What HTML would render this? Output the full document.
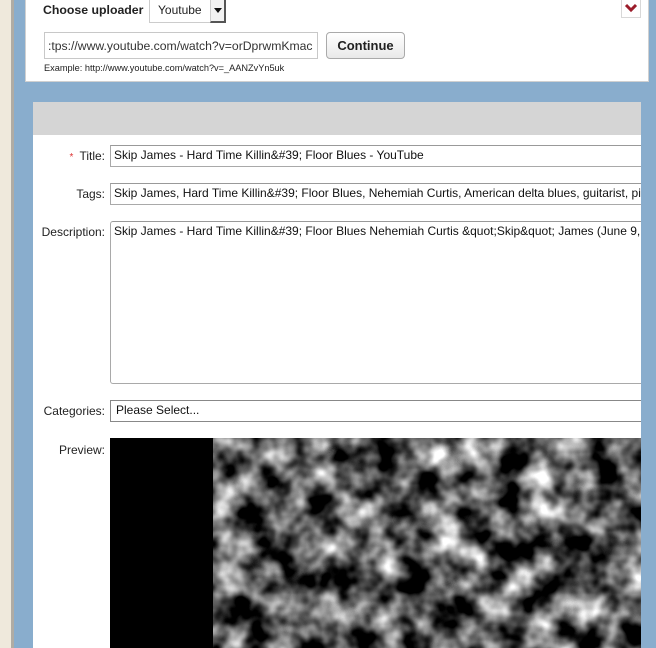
<!DOCTYPE html>
<html><head><style>
*{margin:0;padding:0;box-sizing:border-box}
body{width:656px;height:648px;overflow:hidden;background:#89adcd;font-family:"Liberation Sans",Arial,sans-serif;position:relative;font-size:12px;color:#222}
.abs{position:absolute}
.inp{position:absolute;background:#fff;border:1px solid #a9a9a9;border-top-color:#999;white-space:nowrap;overflow:hidden;font-size:12px;color:#111;padding:2px 3px}
.lbl{position:absolute;font-size:12px;color:#222;text-align:right;width:105px;left:0}
</style></head><body>
<div class="abs" style="left:0;top:0;width:11px;height:648px;background:#efe9dc"></div>
<div class="abs" style="left:11px;top:0;width:3px;height:648px;background:#b0aca4"></div>
<div class="abs" style="left:25px;top:0;width:624px;height:82px;background:#fff;border:1px solid #d0d0d0;border-top:none"></div>
<div class="abs" style="left:43px;top:3px;font-weight:bold;font-size:12.3px;color:#222">Choose uploader</div>
<div class="abs" style="left:149px;top:0;width:77px;height:23px;background:#fff;border:1px solid #ccc;border-top:none;font-size:12px;padding:3px 0 0 8px">Youtube</div>
<div class="abs" style="left:210px;top:0;width:16px;height:23px;background:#f2f2f2;border-left:1px solid #ccc;border-right:2px solid #555;border-bottom:2px solid #555"></div>
<div class="abs" style="left:214px;top:8px;width:0;height:0;border-left:4px solid transparent;border-right:4px solid transparent;border-top:5px solid #111"></div>
<div class="abs" style="left:621px;top:0;width:20px;height:18px;border:1px solid #d8d8d8;border-top:none"></div>
<svg class="abs" style="left:624px;top:3px" width="14" height="10"><path d="M2 2 L7 7 L12 2" stroke="#9b1c2a" stroke-width="3" fill="none"/></svg>
<div class="inp" style="left:44px;top:32px;width:274px;height:27px;font-size:12.2px;padding:6px 3px;color:#333;border-color:#c8c8c8">:tps://www.youtube.com/watch?v=orDprwmKmac</div>
<div class="abs" style="left:326px;top:32px;width:79px;height:27px;border:1px solid #aaa;border-radius:4px;background:linear-gradient(#fff,#e9e9e9);font-weight:bold;font-size:13px;text-align:center;line-height:25px">Continue</div>
<div class="abs" style="left:44px;top:63px;font-size:9.2px;color:#222">Example: http://www.youtube.com/watch?v=_AANZvYn5uk</div>
<div class="abs" style="left:33px;top:102px;width:608px;height:33px;background:#d5d5d5"></div>
<div class="abs" style="left:33px;top:135px;width:608px;height:513px;background:#fff"></div>
<div class="lbl" style="top:149px"><span style="color:#d33;font-size:10px;margin-right:6px">*</span>Title:</div>
<div class="inp" style="left:110px;top:145px;width:560px;height:22px">Skip James - Hard Time Killin&amp;#39; Floor Blues - YouTube</div>
<div class="lbl" style="top:187px">Tags:</div>
<div class="inp" style="left:110px;top:183px;width:560px;height:22px">Skip James, Hard Time Killin&amp;#39; Floor Blues, Nehemiah Curtis, American delta blues, guitarist, pianist</div>
<div class="lbl" style="top:225px">Description:</div>
<div class="inp" style="left:110px;top:221px;width:560px;height:163px;border-radius:3px">Skip James - Hard Time Killin&amp;#39; Floor Blues Nehemiah Curtis &amp;quot;Skip&amp;quot; James (June 9, 1902</div>
<div class="lbl" style="top:404px">Categories:</div>
<div class="inp" style="left:110px;top:400px;width:560px;height:22px;border-color:#888;padding-left:5px">Please Select...</div>
<div class="lbl" style="top:443px">Preview:</div>
<div class="abs" style="left:110px;top:438px;width:103px;height:210px;background:#000"></div>
<svg class="abs" style="left:213px;top:438px" width="428" height="210">
<filter id="f" x="0" y="0" width="100%" height="100%" color-interpolation-filters="sRGB">
<feTurbulence type="fractalNoise" baseFrequency="0.032" numOctaves="3" seed="7"/>
<feColorMatrix type="matrix" values="2.2 0 0 0 -0.75  2.2 0 0 0 -0.75  2.2 0 0 0 -0.75  0 0 0 0 1"/>
</filter>
<rect width="428" height="210" fill="#555" filter="url(#f)"/>
</svg>
<div class="abs" style="left:641px;top:102px;width:15px;height:546px;background:#89adcd"></div>
</body></html>
